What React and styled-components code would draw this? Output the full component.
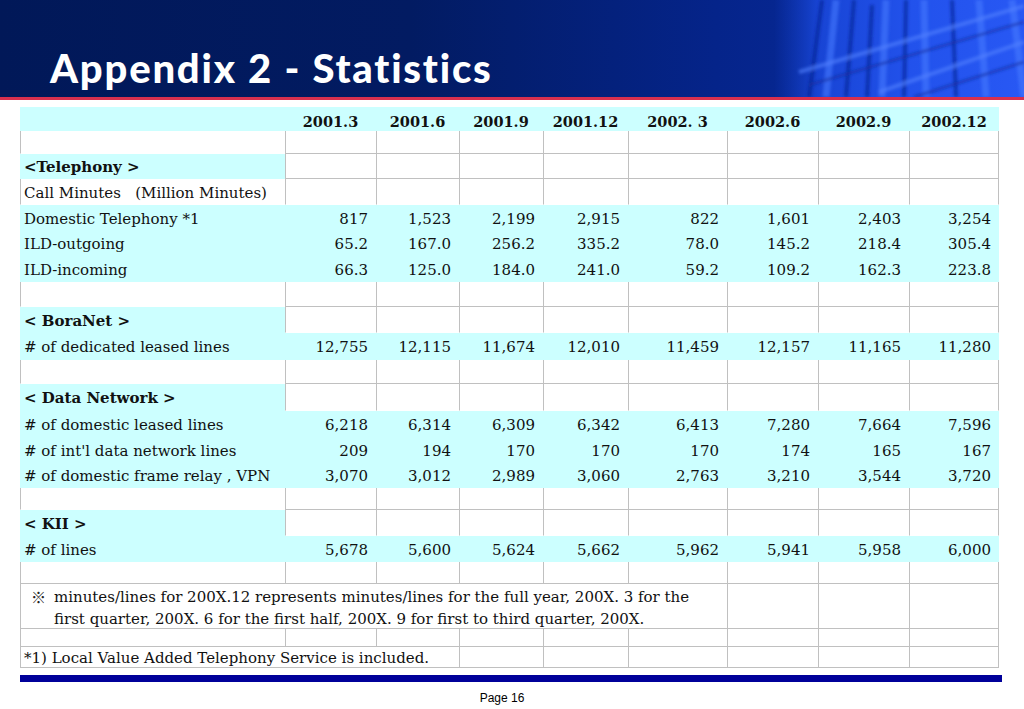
import styled, { createGlobalStyle } from 'styled-components';

const GlobalStyle = createGlobalStyle`
  html, body {
    margin: 0;
    padding: 0;
    background: #ffffff;
  }
`;

const COLS = '265px 91px 83px 84px 85px 99px 91px 91px 90px';
const CYAN = '#ccffff';
const GRID = '#c0c0c0';

const PERIODS = ['2001.3', '2001.6', '2001.9', '2001.12', '2002. 3', '2002.6', '2002.9', '2002.12'];

const ROWS = [
  { h: 23, kind: 'blank' },
  { h: 25, kind: 'section', label: '<Telephony >' },
  { h: 26, kind: 'caption', label: 'Call Minutes   (Million Minutes)' },
  { h: 26, kind: 'data', label: 'Domestic Telephony *1', values: ['817', '1,523', '2,199', '2,915', '822', '1,601', '2,403', '3,254'] },
  { h: 25, kind: 'data', label: 'ILD-outgoing', values: ['65.2', '167.0', '256.2', '335.2', '78.0', '145.2', '218.4', '305.4'] },
  { h: 26, kind: 'data', label: 'ILD-incoming', values: ['66.3', '125.0', '184.0', '241.0', '59.2', '109.2', '162.3', '223.8'] },
  { h: 25, kind: 'blank' },
  { h: 26, kind: 'section', label: '< BoraNet >' },
  { h: 27, kind: 'data', label: '# of dedicated leased lines', values: ['12,755', '12,115', '11,674', '12,010', '11,459', '12,157', '11,165', '11,280'] },
  { h: 24, kind: 'blank' },
  { h: 27, kind: 'section', label: '< Data Network >' },
  { h: 26, kind: 'data', label: '# of domestic leased lines', values: ['6,218', '6,314', '6,309', '6,342', '6,413', '7,280', '7,664', '7,596'] },
  { h: 26, kind: 'data', label: "# of int'l data network lines", values: ['209', '194', '170', '170', '170', '174', '165', '167'] },
  { h: 25, kind: 'data', label: '# of domestic frame relay , VPN', values: ['3,070', '3,012', '2,989', '3,060', '2,763', '3,210', '3,544', '3,720'] },
  { h: 22, kind: 'blank' },
  { h: 26, kind: 'section', label: '< KII >' },
  { h: 26, kind: 'data', label: '# of lines', values: ['5,678', '5,600', '5,624', '5,662', '5,962', '5,941', '5,958', '6,000'] },
  { h: 22, kind: 'blank' },
  { h: 23, kind: 'note', mark: true, label: 'minutes/lines for 200X.12 represents minutes/lines for the full year, 200X. 3 for the' },
  { h: 22, kind: 'note', label: 'first quarter, 200X. 6 for the first half, 200X. 9 for first to third quarter, 200X.' },
  { h: 18, kind: 'blank' },
  { h: 20, kind: 'footnote', label: '*1) Local Value Added Telephony Service is included.' },
];

const empties = (n) => Array.from({ length: n }, () => ({ span: 1 }));

function buildCells(row) {
  switch (row.kind) {
    case 'data':
      return [
        { span: 1, fill: true, text: row.label },
        ...row.values.map((v) => ({ span: 1, fill: true, text: v, num: true })),
      ];
    case 'section':
      return [{ span: 1, fill: true, text: row.label, bold: true }, ...empties(8)];
    case 'caption':
      return [{ span: 1, text: row.label }, ...empties(8)];
    case 'note':
      return [{ span: 6, text: row.label, note: true, mark: row.mark }, ...empties(3)];
    case 'footnote':
      return [{ span: 3, text: row.label }, ...empties(6)];
    default:
      return empties(9);
  }
}

function fillMap(cells) {
  const out = [];
  cells.forEach((c) => {
    for (let i = 0; i < c.span; i += 1) out.push(!!c.fill);
  });
  return out;
}

export default function App() {
  const built = ROWS.map(buildCells);
  const fills = built.map(fillMap);

  return (
    <>
      <GlobalStyle />
      <Slide>
        <TitleBar>
          <Glass />
          <Title>Appendix 2 - Statistics</Title>
        </TitleBar>

        <Table>
          <HeadRow>
            <HeadCell />
            {PERIODS.map((p) => (
              <HeadCell key={p}>{p}</HeadCell>
            ))}
          </HeadRow>

          {built.map((cells, r) => {
            let col = 0;
            return (
              // eslint-disable-next-line react/no-array-index-key
              <Row key={r} $h={ROWS[r].h}>
                {cells.map((c, i) => {
                  const start = col;
                  col += c.span;
                  const below = fills[r + 1] ? fills[r + 1][start] : false;
                  return (
                    <Cell
                      // eslint-disable-next-line react/no-array-index-key
                      key={i}
                      $span={c.span}
                      $fill={c.fill}
                      $line={!c.fill && !below}
                      $last={col === 9}
                      $num={c.num}
                      $bold={c.bold}
                      $note={c.note}
                      $mark={c.mark}
                    >
                      {c.mark && <Mark>※</Mark>}
                      {c.text}
                    </Cell>
                  );
                })}
              </Row>
            );
          })}
        </Table>

        <BottomRule />
        <PageNo>Page 16</PageNo>
      </Slide>
    </>
  );
}

function Glass() {
  return (
    <GlassArt viewBox="0 0 250 97" preserveAspectRatio="none">
      <defs>
        <linearGradient id="fade" x1="0" y1="0" x2="1" y2="0">
          <stop offset="0" stopColor="#1440cc" stopOpacity="0" />
          <stop offset="0.18" stopColor="#1a48dc" stopOpacity="0.9" />
          <stop offset="0.55" stopColor="#2252ec" stopOpacity="1" />
          <stop offset="1" stopColor="#2858f4" stopOpacity="1" />
        </linearGradient>
        <filter id="soft" x="-10%" y="-10%" width="120%" height="120%">
          <feGaussianBlur stdDeviation="1.4" />
        </filter>
      </defs>
      <rect x="0" y="0" width="250" height="97" fill="url(#fade)" />
      <g filter="url(#soft)">
        <g stroke="#4678ff" strokeWidth="7" opacity="0.6">
          <line x1="62" y1="0" x2="52" y2="97" />
          <line x1="112" y1="0" x2="108" y2="97" />
          <line x1="150" y1="0" x2="152" y2="97" />
          <line x1="205" y1="0" x2="212" y2="97" />
          <line x1="238" y1="0" x2="250" y2="97" />
        </g>
        <g stroke="#0b2290" strokeWidth="4" opacity="0.6">
          <line x1="48" y1="0" x2="35" y2="97" />
          <line x1="80" y1="0" x2="72" y2="97" />
          <line x1="98" y1="5" x2="93" y2="97" />
          <line x1="132" y1="0" x2="130" y2="97" />
          <line x1="178" y1="0" x2="182" y2="97" />
        </g>
        <g stroke="#5282ff" strokeWidth="4" opacity="0.6">
          <line x1="25" y1="72" x2="250" y2="6" />
          <line x1="105" y1="92" x2="250" y2="42" />
        </g>
        <g stroke="#10299c" strokeWidth="3" opacity="0.55">
          <line x1="35" y1="85" x2="250" y2="22" />
          <line x1="140" y1="97" x2="250" y2="62" />
        </g>
      </g>
    </GlassArt>
  );
}

const Slide = styled.div`
  width: 1024px;
  height: 709px;
  overflow: hidden;
  background: #ffffff;
  display: flex;
  flex-direction: column;
`;

const TitleBar = styled.header`
  position: relative;
  height: 97px;
  border-bottom: 3px solid #d8304e;
  background: linear-gradient(90deg, #011858 0%, #021b62 40%, #05248a 70%, #0a2ea6 100%);
  display: flex;
  align-items: flex-end;
  overflow: hidden;
`;

const GlassArt = styled.svg`
  position: absolute;
  top: 0;
  right: 0;
  width: 250px;
  height: 97px;
`;

const Title = styled.h1`
  position: relative;
  margin: 0 0 6px 50px;
  font-family: Lato, "Open Sans", sans-serif;
  font-weight: 900;
  font-size: 40px;
  line-height: 46px;
  color: #ffffff;
  letter-spacing: 1.8px;
`;

const Table = styled.div`
  margin: 7px 0 0 20px;
  width: 979px;
  display: flex;
  flex-direction: column;
  font-family: "DejaVu Serif", "Liberation Serif", "Noto Sans CJK JP", serif;
  font-size: 15px;
  color: #111111;
`;

const HeadRow = styled.div`
  display: grid;
  grid-template-columns: ${COLS};
  height: 24px;
  background: ${CYAN};
`;

const HeadCell = styled.div`
  display: flex;
  align-items: center;
  justify-content: center;
  padding-top: 4px;
  font-weight: 700;
  font-size: 14.5px;
`;

const Row = styled.div`
  display: grid;
  grid-template-columns: ${COLS};
  height: ${(p) => p.$h}px;
`;

const Cell = styled.div`
  box-sizing: border-box;
  grid-column: span ${(p) => p.$span};
  display: flex;
  align-items: center;
  justify-content: ${(p) => (p.$num ? 'flex-end' : 'flex-start')};
  padding: 2px ${(p) => (p.$num ? '8px' : '0')} 0 ${(p) => {
    if (p.$mark) return '10px';
    if (p.$note) return '33px';
    return '3px';
  }};
  background: ${(p) => (p.$fill ? CYAN : '#ffffff')};
  border-left: 1px solid ${(p) => (p.$fill ? CYAN : GRID)};
  border-bottom: 1px solid ${(p) => (p.$line ? GRID : 'transparent')};
  border-right: ${(p) => (p.$last && !p.$fill ? `1px solid ${GRID}` : '0')};
  font-weight: ${(p) => (p.$bold ? 700 : 400)};
  white-space: pre;
`;

const Mark = styled.span`
  display: inline-block;
  width: 23px;
  font-family: "Noto Sans CJK JP", sans-serif;
  font-size: 15px;
  color: #222222;
`;

const BottomRule = styled.div`
  margin: 8px 0 0 20px;
  width: 982px;
  height: 7px;
  background: #00009a;
`;

const PageNo = styled.div`
  margin-top: 9px;
  padding-right: 20px;
  text-align: center;
  font-family: "Liberation Sans", Arial, sans-serif;
  font-size: 12px;
  color: #000000;
`;
